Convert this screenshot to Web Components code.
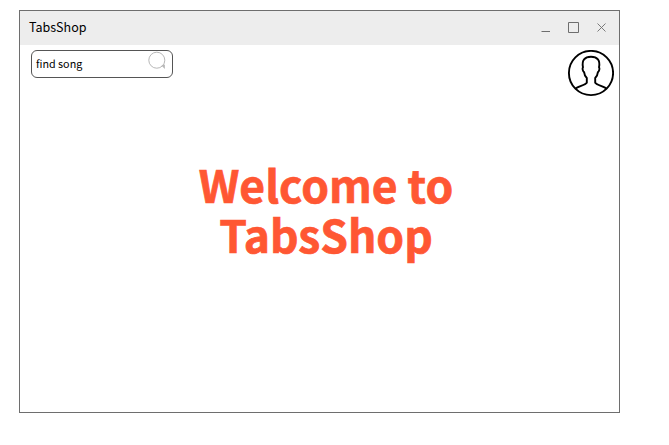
<!DOCTYPE html>
<html lang="en">
<head>
<meta charset="utf-8">
<title>TabsShop</title>
<style>
body { margin: 0; padding: 10px 0 0 19px; background: #fff; font-family: "Noto Sans CJK SC", "Noto Sans", sans-serif; color: #000; }
</style>
</head>
<body>
<shop-window heading="TabsShop">
  <search-field slot="tools" value="find song"></search-field>
  <user-avatar slot="tools"></user-avatar>
  <welcome-banner>Welcome to TabsShop</welcome-banner>
</shop-window>
<script>
class ShopWindow extends HTMLElement {
  constructor() {
    super();
    this.attachShadow({ mode: "open" }).innerHTML = `
    <style>
      :host { display: flex; flex-direction: column; box-sizing: border-box; width: 601px; height: 403px; border: 1px solid #6e6e6e; background: #fff; }
      header { flex: none; display: flex; align-items: center; justify-content: space-between; height: 34px; background: #ededed; padding: 0 12px 0 9px; }
      .name { font-size: 12.5px; line-height: 20px; padding-bottom: 2px; }
      svg { display: block; }
      .tools { flex: none; display: flex; justify-content: space-between; align-items: flex-start; padding: 5px 5px 0 11px; height: 68px; box-sizing: border-box; }
    </style>
    <header><span class="name"></span>
      <svg width="66" height="12" viewBox="0 0 66 12" fill="none" stroke="#6e6e6e">
        <path d="M.5 9.500H9M27.500 .5h10v10h-10z"/>
        <path d="M56.500 1.500l8 8m0-8l-8 8" stroke-width=".9"/>
      </svg></header>
    <div class="tools"><slot name="tools"></slot></div>
    <slot></slot>`;
    this.shadowRoot.querySelector(".name").textContent = this.getAttribute("heading");
  }
}
class SearchField extends HTMLElement {
  constructor() {
    super();
    this.attachShadow({ mode: "open" }).innerHTML = `
    <style>
      :host { display: flex; box-sizing: border-box; width: 142px; height: 28px; border: 1px solid #555; border-radius: 6px; padding: 0 5px 0 4px; justify-content: space-between; }
      span { font-size: 10.75px; line-height: 25px; }
      svg { display: block; }
    </style>
    <span></span>
    <svg width="20" height="20" viewBox="0 0 20 20" fill="none" stroke="#b8b8b8"><circle cx="9.800" cy="9.200" r="8"/><path d="M14.400 14.600l3.500 3.400v-4.400z" fill="#b8b8b8" stroke="none"/></svg>`;
    this.shadowRoot.querySelector("span").textContent = this.getAttribute("value");
  }
}
class UserAvatar extends HTMLElement {
  constructor() {
    super();
    this.attachShadow({ mode: "open" }).innerHTML = `
    <style>:host { display: block; } svg { display: block; }</style>
    <svg width="47" height="47" viewBox="0 0 47 47" fill="none" stroke="#000" stroke-width="1.900" stroke-linejoin="round">
      <circle cx="24" cy="23" r="22.100"/>
      <path d="M8.300 38.700C11.500 36 18 35.500 19.800 32.800V28C18.200 26.500 17.300 24.300 17.100 22.200C15.600 20.800 15.100 18.300 16 17.300C14.500 10.300 17.700 6.700 24 6.700S33.500 10.300 32 17.300C32.900 18.300 32.400 20.800 30.900 22.200C30.700 24.300 29.800 26.500 28.200 28V32.800C30 35.500 36.500 36 39.700 38.700"/>
    </svg>`;
  }
}
class WelcomeBanner extends HTMLElement {
  constructor() {
    super();
    this.attachShadow({ mode: "open" }).innerHTML = `
    <style>
      :host { display: block; width: 300px; margin: 46px 0 0 156px; color: #ff5733; font-weight: 700; font-size: 44.400px; line-height: 50px; text-align: center; -webkit-text-stroke: .7px #ff5733; }
    </style><slot></slot>`;
  }
}
customElements.define("shop-window", ShopWindow);
customElements.define("search-field", SearchField);
customElements.define("user-avatar", UserAvatar);
customElements.define("welcome-banner", WelcomeBanner);
</script>
</body>
</html>
